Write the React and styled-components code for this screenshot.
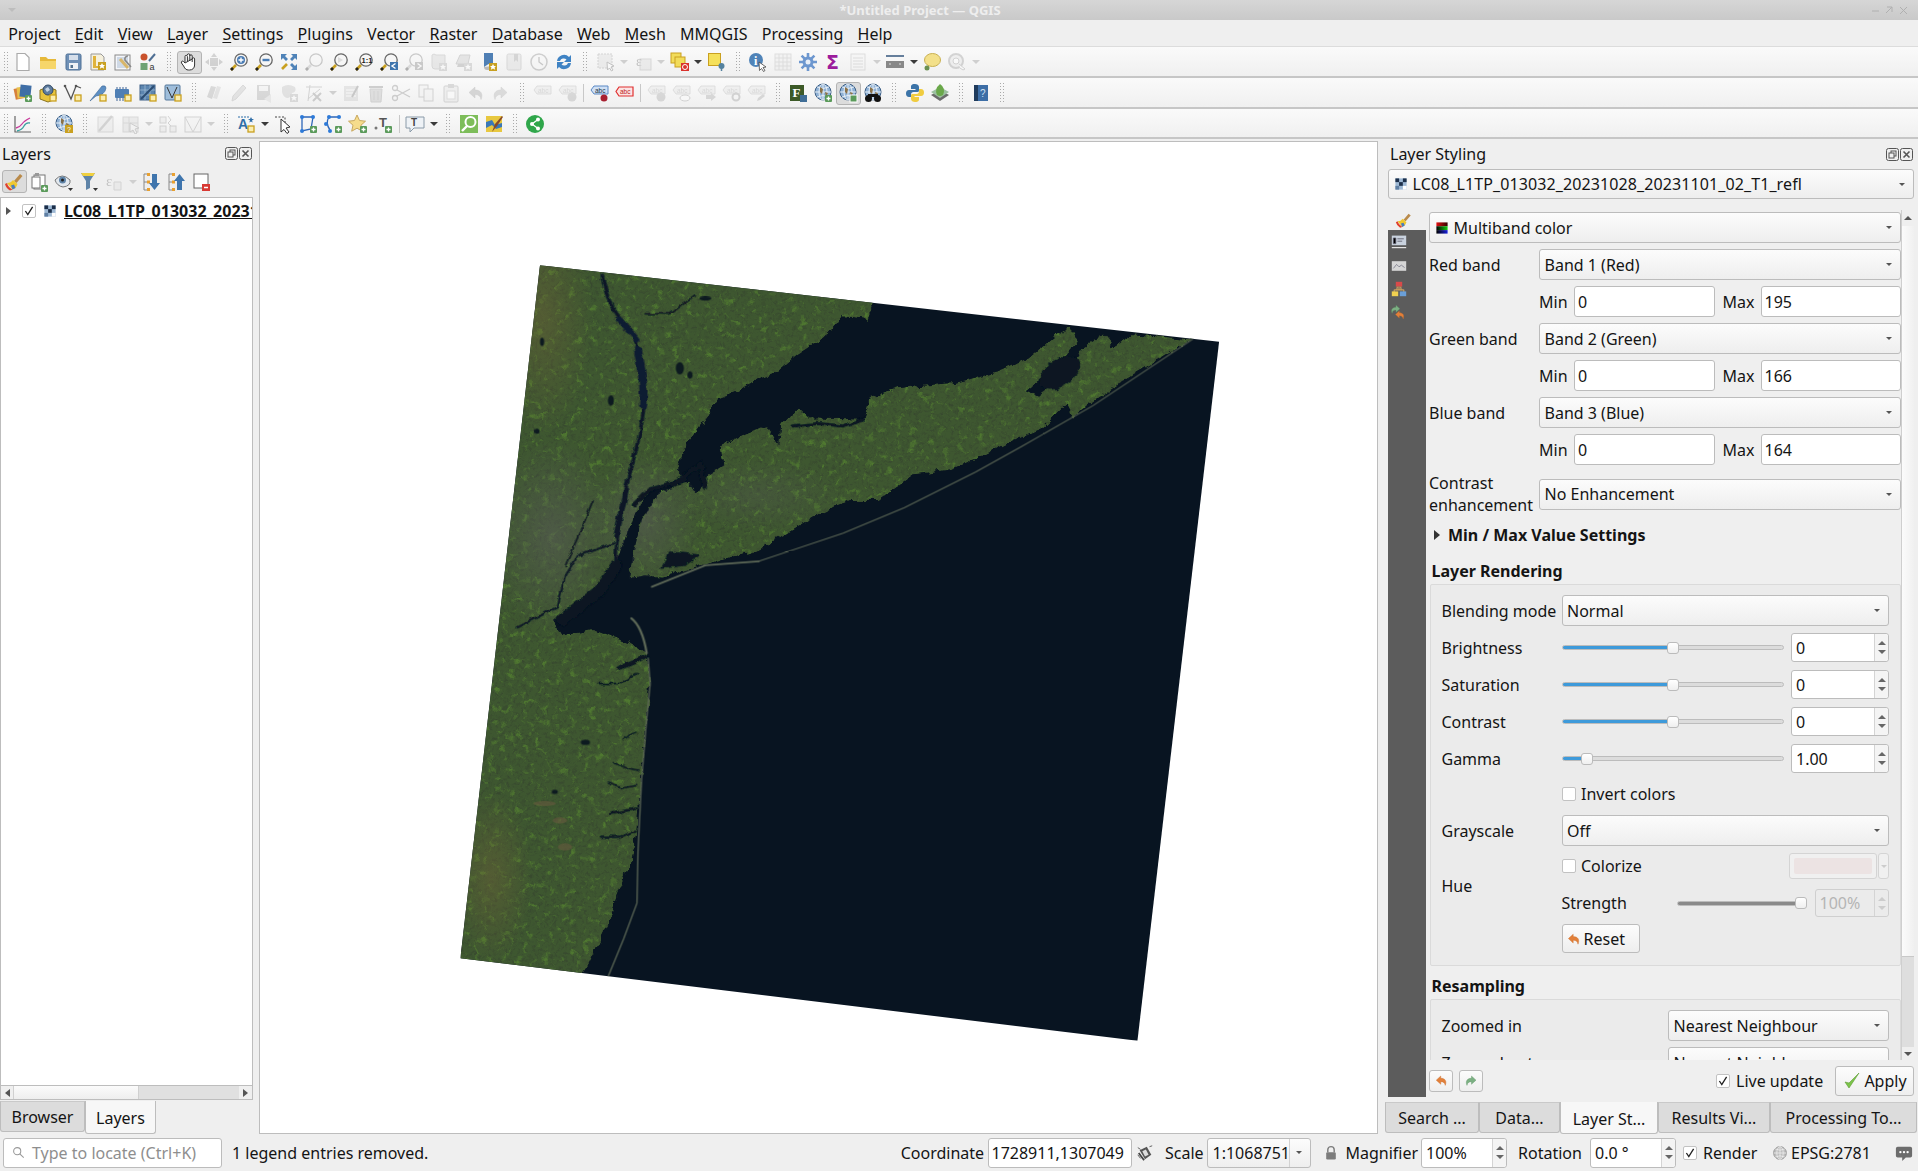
import React from "react";
import styled, { createGlobalStyle } from "styled-components";

const Global = createGlobalStyle`
  html, body { margin: 0; padding: 0; background: #efefef; }
  body { font-family: "Noto Sans", "Open Sans", sans-serif; font-size: 16px; color: #141414; }
  * { box-sizing: border-box; }
`;

const S = {
  Root: styled.div`
    width: 1918px;
    height: 1171px;
    overflow: hidden;
    display: flex;
    flex-direction: column;
    background: #efefef;
  `,
  TitleBar: styled.div`
    height: 20px;
    flex: none;
    display: flex;
    align-items: center;
    justify-content: space-between;
    padding: 0 8px;
    background: linear-gradient(#d6d6d6, #c9c9c9);
  `,
  Title: styled.div`
    font-weight: 700;
    font-size: 13px;
    color: #eeeeee;
    margin-right: 46px;
  `,
  MenuBar: styled.div`
    height: 27px;
    flex: none;
    display: flex;
    align-items: center;
    background: #efefef;
    border-bottom: 1px solid #dcdcdc;
    padding: 1px 0 0 1px;
  `,
  MenuItem: styled.div`
    padding: 0 7.15px;
    font-size: 16px;
    u { text-underline-offset: 2px; text-decoration-thickness: 1px; }
  `,
  Toolbar: styled.div`
    height: ${(p) => p.$h || 31}px;
    flex: none;
    display: flex;
    align-items: center;
    padding-top: ${(p) => p.$pt || 1}px;
    background: linear-gradient(#fafafa, #f0f0f0);
    border-bottom: 2px solid #c6c6c6;
  `,
  Grip: styled.div`
    flex: none;
    width: ${(p) => p.$w || 16.5}px;
    height: 22px;
    display: flex;
    justify-content: center;
    &::before {
      content: "";
      width: 5px;
      height: 100%;
      background-image: radial-gradient(circle, #aaa 0.8px, transparent 1px);
      background-size: 3px 3px;
    }
    &:first-child {
      width: 10.2px;
    }
  `,
  ToolBtn: styled.div`
    flex: none;
    width: 25px;
    height: 23px;
    display: flex;
    align-items: center;
    justify-content: center;
    border-radius: 3px;
    ${(p) => p.$on && "background: #dcdcdc; border: 1px solid #b4b4b4;"}
    svg {
      display: block;
      ${(p) => p.$off && "filter: grayscale(1) opacity(0.32);"}
    }
  `,
  Drop: styled.div`
    flex: none;
    width: 12px;
    display: flex;
    justify-content: center;
    &::before {
      content: "";
      border-left: 4px solid transparent;
      border-right: 4px solid transparent;
      border-top: 4px solid ${(p) => (p.$off ? "#cfcfcf" : "#3a3a3a")};
    }
  `,
  Sep: styled.div`
    flex: none;
    width: ${(p) => p.$w || 7}px;
    height: 18px;
    display: flex;
    justify-content: center;
    &::before {
      content: "";
      width: 1px;
      background: #c8c8c8;
    }
  `,
  Main: styled.div`
    height: 995px;
    flex: none;
    display: flex;
  `,
  LeftDock: styled.div`
    width: 253px;
    flex: none;
    margin-right: 6px;
    display: flex;
    flex-direction: column;
  `,
  DockTitle: styled.div`
    height: ${(p) => p.$h}px;
    flex: none;
    display: flex;
    align-items: center;
    justify-content: space-between;
    padding-left: 2px;
    padding-bottom: ${(p) => p.$pb || 0}px;
  `,
  DockBtns: styled.div`
    display: flex;
    gap: 1px;
    padding-right: ${(p) => p.$r || 1}px;
  `,
  LayerTools: styled.div`
    height: 27px;
    flex: none;
    display: flex;
    align-items: center;
    padding: 0 0 4px 1.5px;
  `,
  Tree: styled.div`
    flex: 1;
    background: #fff;
    border: 1px solid #bdbdbd;
    border-bottom: none;
    overflow: hidden;
  `,
  TreeRow: styled.div`
    height: 26px;
    display: flex;
    align-items: center;
    padding-left: 5px;
    & > * {
      flex: none;
    }
  `,
  Twisty: styled.div`
    width: 0;
    height: 0;
    border-top: 4px solid transparent;
    border-bottom: 4px solid transparent;
    border-left: 5px solid #555;
    margin-right: 11px;
  `,
  TreeName: styled.div`
    margin-left: 7px;
    font-weight: 700;
    font-size: 16px;
    text-decoration: underline;
    white-space: nowrap;
  `,
  HScroll: styled.div`
    height: 15px;
    flex: none;
    display: flex;
    border: 1px solid #bdbdbd;
  `,
  ScrollBtn: styled.div`
    flex: none;
    width: ${(p) => p.$w || 12}px;
    height: ${(p) => p.$h || "auto"};
    display: flex;
    align-items: center;
    justify-content: center;
    background: #efefef;
  `,
  ThumbH: styled.div`
    width: 126px;
    background: linear-gradient(#fbfbfb, #eeeeee);
    border: 1px solid #d0d0d0;
    border-top: none;
    border-bottom: none;
  `,
  GrooveH: styled.div`
    flex: 1;
    background: #e0e0e0;
  `,
  Tri: styled.div`
    width: 0;
    height: 0;
    flex: none;
    ${(p) =>
      p.$dir === "l" &&
      `border-top:4px solid transparent;border-bottom:4px solid transparent;border-right:5px solid #555;`}
    ${(p) =>
      p.$dir === "r" &&
      `border-top:${p.$s || 4}px solid transparent;border-bottom:${p.$s || 4}px solid transparent;border-left:${(p.$s || 4) + 1}px solid ${p.$c || "#555"};`}
    ${(p) =>
      p.$dir === "u" &&
      `border-left:${p.$s || 4}px solid transparent;border-right:${p.$s || 4}px solid transparent;border-bottom:${p.$s || 4}px solid ${p.$c || "#555"};`}
    ${(p) =>
      p.$dir === "d" &&
      `border-left:${p.$s || 4}px solid transparent;border-right:${p.$s || 4}px solid transparent;border-top:${p.$s || 4}px solid ${p.$c || "#555"};`}
  `,
  Tabs: styled.div`
    display: flex;
    align-items: flex-start;
    flex: none;
    height: ${(p) => p.$h}px;
    margin-top: ${(p) => p.$mt || 0}px;
    margin-left: ${(p) => p.$ml || 0}px;
  `,
  Tab: styled.div`
    width: ${(p) => p.$w}px;
    height: ${(p) => (p.$on ? "100%" : "31px")};
    flex: none;
    display: flex;
    align-items: center;
    justify-content: center;
    border: 1px solid #bdbdbd;
    border-top: ${(p) => (p.$on ? "none" : "1px solid #c9c9c9")};
    border-radius: 0 0 3px 3px;
    background: ${(p) => (p.$on ? "#f7f7f7" : "#dcdcdc")};
    padding-top: ${(p) => (p.$on ? 2 : 0)}px;
    white-space: nowrap;
  `,
  Canvas: styled.div`
    width: 1119px;
    flex: none;
    margin: 2px 7px 0 0;
    background: #fff;
    border: 1px solid #bdbdbd;
    position: relative;
    overflow: hidden;
  `,
  MapSvg: styled.svg`
    position: absolute;
    left: 180px;
    top: 108px;
    display: block;
  `,
  RightDock: styled.div`
    width: 533px;
    flex: none;
    padding: 0 4px 0 3px;
    display: flex;
    flex-direction: column;
  `,
  LayerCombo: styled.div`
    height: 30px;
    flex: none;
    display: flex;
  `,
  Body: styled.div`
    height: 887px;
    flex: none;
    margin-top: 11px;
    display: flex;
  `,
  Side: styled.div`
    width: 38px;
    flex: none;
    display: flex;
    flex-direction: column;
  `,
  SideTop: styled.div`
    height: 20px;
    flex: none;
    padding: 0 0 0 7px;
    display: flex;
    align-items: center;
  `,
  SideRest: styled.div`
    flex: 1;
    background: #5c5c5c;
    display: flex;
    flex-direction: column;
    padding: 4px 0 0 3px;
    gap: 7.5px;
  `,
  Column: styled.div`
    flex: 1;
    min-width: 0;
    margin-left: 3px;
    display: flex;
    flex-direction: column;
  `,
  Scroller: styled.div`
    height: 850px;
    flex: none;
    display: flex;
  `,
  Form: styled.div`
    width: 472px;
    flex: none;
    overflow: hidden;
    padding-top: 2px;
  `,
  VScroll: styled.div`
    width: 13px;
    flex: none;
    display: flex;
    flex-direction: column;
    border-left: 1px solid #cfcfcf;
  `,
  ThumbV: styled.div`
    height: 731px;
    flex: none;
    background: linear-gradient(90deg, #fbfbfb, #f0f0f0);
    border-bottom: 1px solid #c8c8c8;
  `,
  GrooveV: styled.div`
    flex: 1;
    background: #dedede;
  `,
  Row: styled.div`
    display: flex;
    align-items: center;
    height: ${(p) => p.$h || 31}px;
    margin-top: ${(p) => p.$mt || 0}px;
    flex: none;
  `,
  Label: styled.div`
    flex: none;
    width: ${(p) => p.$w}px;
    line-height: 22px;
    ${(p) => p.$top && `align-self: flex-start; margin-top: ${p.$top}px;`}
  `,
  Combo: styled.div`
    flex: ${(p) => (p.$w ? "none" : 1)};
    width: ${(p) => (p.$w ? `${p.$w}px` : "auto")};
    height: ${(p) => p.$h || 31}px;
    display: flex;
    align-items: center;
    gap: 5px;
    padding: 0 5px 0 4.5px;
    border: 1px solid #bcbcbc;
    border-radius: 3px;
    background: linear-gradient(#fcfcfc, #eeeeee);
    white-space: nowrap;
  `,
  ComboText: styled.div`
    flex: 1;
    min-width: 0;
    letter-spacing: ${(p) => p.$ls || 0}px;
  `,
  ComboArrow: styled.div`
    flex: none;
    margin-right: 3px;
    width: 0;
    height: 0;
    border-left: 3.5px solid transparent;
    border-right: 3.5px solid transparent;
    border-top: 3.5px solid #555;
  `,
  ComboDivider: styled.div`
    flex: none;
    width: 1px;
    height: 100%;
    background: #d2d2d2;
    margin-right: 1px;
  `,
  Input: styled.div`
    width: ${(p) => p.$w}px;
    flex: ${(p) => (p.$w ? "none" : 1)};
    height: ${(p) => p.$h || 31}px;
    display: flex;
    align-items: center;
    padding-left: 3px;
    background: #fff;
    border: 1px solid #bcbcbc;
    border-radius: 3px;
    white-space: nowrap;
  `,
  Expander: styled.div`
    height: 30px;
    display: flex;
    align-items: center;
    font-weight: 700;
    padding-left: 5px;
    gap: 8px;
    margin-top: 4px;
  `,
  Heading: styled.div`
    height: 25px;
    display: flex;
    align-items: center;
    font-weight: 700;
    padding: 0 0 2px 2.5px;
    margin-top: ${(p) => p.$mt || 0}px;
  `,
  Group: styled.div`
    margin-left: 1px;
    border: 1px solid #dadada;
    border-radius: 2px;
    background: #ebebeb;
    padding: ${(p) => p.$pt || 10}px 11px 0 10.5px;
    height: ${(p) => p.$h}px;
  `,
  SliderBox: styled.div`
    position: relative;
    flex: none;
    width: ${(p) => p.$w}px;
    height: 14px;
    margin-right: ${(p) => p.$mr || 0}px;
    display: flex;
    align-items: center;
  `,
  Track: styled.div`
    width: 100%;
    height: 5px;
    border-radius: 3px;
    border: 1px solid #bcbcbc;
    background: linear-gradient(
      90deg,
      ${(p) => p.$fill} ${(p) => p.$value}%,
      #dcdcdc ${(p) => p.$value}%
    );
  `,
  Handle: styled.div`
    position: absolute;
    top: 1px;
    left: ${(p) => p.$value}%;
    margin-left: -6px;
    width: 12px;
    height: 12px;
    border: 1px solid #bbb;
    border-radius: 3px;
    background: linear-gradient(#fff, #efefef);
  `,
  Spin: styled.div`
    flex: ${(p) => (p.$w ? "none" : 1)};
    width: ${(p) => p.$w}px;
    height: ${(p) => p.$h || 29}px;
    display: flex;
    border: 1px solid ${(p) => (p.$off ? "#cfcfcf" : "#bcbcbc")};
    border-radius: 3px;
    background: ${(p) => (p.$off ? "#ebebeb" : "#fff")};
    color: ${(p) => (p.$off ? "#b5b5b5" : "inherit")};
  `,
  SpinText: styled.div`
    flex: 1;
    display: flex;
    align-items: center;
    padding-left: 4px;
    white-space: nowrap;
  `,
  SpinBtns: styled.div`
    width: 14px;
    flex: none;
    display: flex;
    flex-direction: column;
    align-items: center;
    justify-content: center;
    gap: 5px;
    border-left: 1px solid #d4d4d4;
    background: ${(p) => (p.$off ? "#ebebeb" : "#f4f4f4")};
    border-radius: 0 3px 3px 0;
  `,
  Check: styled.div`
    width: 14px;
    height: 14px;
    flex: none;
    border: 1px solid #c2c2c2;
    border-radius: 2px;
    background: #fff;
    display: flex;
    align-items: center;
    justify-content: center;
    margin-right: ${(p) => p.$mr ?? 5.5}px;
  `,
  HueBlock: styled.div`
    display: flex;
    margin-top: 7px;
  `,
  HueCol: styled.div`
    flex: 1;
    display: flex;
    flex-direction: column;
  `,
  ColorBtn: styled.div`
    margin-left: auto;
    width: 88px;
    height: 26px;
    padding: 4px;
    border: 1px solid #d4d4d4;
    border-radius: 3px;
    background: #f0f0f0;
    &::before {
      content: "";
      display: block;
      height: 100%;
      border-radius: 2px;
      background: #ece3e3;
    }
  `,
  ColorArrow: styled.div`
    width: 11px;
    height: 26px;
    margin-left: 1px;
    flex: none;
    display: flex;
    align-items: center;
    justify-content: center;
    border: 1px solid #d4d4d4;
    border-radius: 3px;
    background: #f0f0f0;
  `,
  Button: styled.div`
    flex: none;
    width: ${(p) => p.$w}px;
    height: ${(p) => p.$h}px;
    margin-left: ${(p) => p.$ml || 0}px;
    display: flex;
    align-items: center;
    justify-content: ${(p) => (p.$start ? "flex-start" : "center")};
    padding-left: ${(p) => (p.$start ? 3 : 0)}px;
    gap: 2px;
    border: 1px solid #bcbcbc;
    border-radius: 3px;
    background: linear-gradient(#fcfcfc, #eeeeee);
  `,
  ApplyWrap: styled.div`
    margin-left: auto;
  `,
  Footer: styled.div`
    height: 37px;
    flex: none;
    display: flex;
    align-items: center;
    padding-top: 4px;
  `,
  Status: styled.div`
    height: 37px;
    flex: none;
    display: flex;
    align-items: center;
    padding-left: 3px;
    white-space: nowrap;
  `,
  Locator: styled.div`
    width: 219px;
    height: 30px;
    flex: none;
    display: flex;
    align-items: center;
    gap: 7px;
    padding-left: 8px;
    background: #fff;
    border: 1px solid #bcbcbc;
    border-radius: 3px;
    color: #8e8e8e;
  `,
  Message: styled.div`
    flex: 1;
    margin-left: 10px;
  `,
  Tip: styled.div`
    flex: none;
    ${(p) => p.$w && `width: ${p.$w}px;`}
    margin-left: ${(p) => p.$ml || 0}px;
    margin-right: ${(p) => p.$mr || 0}px;
    display: flex;
    align-items: center;
  `,
};

const gold = (x, y) => (
  <rect x={x} y={y} width="6" height="6" fill="#fbeeb0" stroke="#c9a020" strokeWidth="1.3" />
);
const star = (x, y) => (
  <g>
    <rect x={x} y={y} width="8" height="8" fill="#c8a020" />
    <path
      d={`M${x + 4} ${y + 1}l1 2h2l-1.5 1.5.7 2.2-2.2-1.2-2.2 1.2.7-2.2L${x + 1} ${y + 3}h2z`}
      fill="#fff"
    />
  </g>
);
const plus = (x, y) => (
  <g>
    <rect x={x} y={y} width="7" height="7" rx="1" fill="#5a9a5a" />
    <path d={`M${x + 3.5} ${y + 1.5}v4M${x + 1.5} ${y + 3.5}h4`} stroke="#fff" strokeWidth="1.3" />
  </g>
);
const lens = (inner) => (
  <g>
    <path d="M7 13L2 18" stroke="#c9a020" strokeWidth="2.6" />
    <path d="M4 16L2 18" stroke="#222" strokeWidth="2.6" />
    <circle cx="12" cy="8" r="6.2" fill="#f6f6f6" stroke="#666" strokeWidth="1.3" />
    {inner}
  </g>
);
const abc = (badge, fill = "#ddd", col = "#999") => (
  <g>
    <path d="M4 3h14v8H4L1 7z" fill={fill} stroke={col} strokeWidth=".8" />
    <text x="5" y="9.5" fontSize="6.5" fontFamily="Liberation Sans" fill={col}>
      abc
    </text>
    {badge}
  </g>
);
const globe = (badge) => (
  <g>
    <circle cx="10" cy="9" r="8" fill="#8eb0d4" stroke="#3d5f86" />
    <path d="M2 9h16M10 1v16M4 4q6 3 12 0M4 14q6-3 12 0" stroke="#e6eef6" fill="none" />
    <ellipse cx="10" cy="9" rx="4" ry="8" fill="none" stroke="#e6eef6" />
    <path d="M7 4l3 2-1 5-2-2zM12 9l3 1-2 4z" fill="#8a7148" />
    {badge}
  </g>
);
const brush = (
  <g>
    <path d="M10 9l6-7 2.500 2-6 7z" fill="#b98a4a" />
    <path d="M3 11q4 0 6-3l4.500 4q-1 4-5 5.500z" fill="#f0c830" />
    <path d="M3 11q1 4 5.500 6.500L6 18.500Q2 16 1 12z" fill="#e0402c" />
    <path d="M7 13.500l3-1 1.500 3.500-3 1.500z" fill="#4a7cc0" />
  </g>
);
const undo = (
  <path d="M8 3L2 8.5 8 14v-3.5c3.5 0 5.5 1.5 6 5 2.5-6-.5-9.5-6-9.5z" fill="#e2803a" stroke="#c96a26" strokeWidth=".5" />
);
const redo = (
  <path
    d="M8 3L2 8.5 8 14v-3.5c3.5 0 5.5 1.5 6 5 2.5-6-.5-9.5-6-9.5z"
    transform="matrix(-1 0 0 1 17 0)"
    fill="#7cb083"
    stroke="#5e9666"
    strokeWidth=".5"
  />
);
const raster = (
  <g>
    <rect x="2" y="2" width="16" height="16" fill="#9db8d4" />
    <rect x="2" y="2" width="5.3" height="5.3" fill="#1c2f4a" />
    <rect x="12.7" y="2" width="5.3" height="5.3" fill="#1c2f4a" />
    <rect x="7.3" y="7.3" width="5.3" height="5.3" fill="#1c2f4a" />
    <rect x="2" y="12.7" width="5.3" height="5.3" fill="#5f7fa3" />
    <rect x="12.7" y="12.7" width="5.3" height="5.3" fill="#fff" />
  </g>
);

const ICONS = {
  new: <path d="M4 1.5h8l4 4v13H4z" fill="#fff" stroke="#aaa" strokeWidth="1.2" />,
  open: (
    <g>
      <path d="M2 5h6l2 2h8v10H2z" fill="#e6b93a" />
      <path d="M2 9h16v8H2z" fill="#f6d66a" />
    </g>
  ),
  save: (
    <g>
      <rect x="3" y="2" width="15" height="16" rx="1.5" fill="#6f90b6" stroke="#4f7096" />
      <rect x="6" y="3" width="9" height="5" fill="#d5deea" />
      <rect x="6" y="11" width="9" height="6" fill="#eef2f6" />
      <rect x="7.5" y="13" width="2.5" height="3" fill="#54728f" />
    </g>
  ),
  saveAs: (
    <g>
      <path d="M3 2h10l3 3v13H3z" fill="#f5f0dc" stroke="#999" />
      <path d="M5 4h3v10h7v2H5z" fill="#e0b33a" />
      {star(10, 10)}
    </g>
  ),
  layout: (
    <g>
      <rect x="2" y="3" width="15" height="15" fill="#f4f6fa" stroke="#8a8a8a" />
      <rect x="4" y="5" width="11" height="11" fill="#cfd9e6" />
      <path d="M7 7l8 9" stroke="#d8b66a" strokeWidth="3" />
      <path d="M15 4a3 3 0 0 0-3 4l6 7" stroke="#888" strokeWidth="1.6" fill="none" />
    </g>
  ),
  style: (
    <g>
      <circle cx="6" cy="5" r="3.5" fill="#c9522c" />
      <rect x="2.5" y="11" width="7" height="7" fill="#6fa374" />
      <path d="M11 9l6-7" stroke="#4f6f94" strokeWidth="2" />
      <text x="11.5" y="18" fontSize="9" fontFamily="Liberation Sans" fill="#333">
        a
      </text>
    </g>
  ),
  hand: (
    <path
      d="M6 10V4.500a1.200 1.200 0 0 1 2.400 0V9m0-6a1.200 1.200 0 0 1 2.400 0v6m0-5a1.200 1.200 0 0 1 2.400 0v6m0-3a1.200 1.200 0 0 1 2.400 0v6c0 3-2 5-5 5h-1c-2.500 0-3.500-1-5-4L2.500 11c-.8-1.500 1-2.500 2-1.500L6 11z"
      fill="#fff"
      stroke="#333"
      strokeWidth="1"
    />
  ),
  panSel: (
    <g fill="#6e8bb0">
      <path d="M10 1l3 4H7zM10 19l-3-4h6zM1 10l4-3v6zM19 10l-4 3V7z" />
      <rect x="6" y="6" width="8" height="8" />
    </g>
  ),
  zoomIn: lens(
    <g>
      <circle cx="12" cy="8" r="4" fill="#4a7cb4" />
      <path d="M12 5.500v5M9.500 8h5" stroke="#fff" strokeWidth="1.400" />
    </g>
  ),
  zoomOut: lens(<path d="M8.500 8h7" stroke="#4a7cb4" strokeWidth="2.400" />),
  full: (
    <g>
      <path d="M2 2h6L6 4l3 3-2 2-3-3-2 2zM18 2v6l-2-2-3 3-2-2 3-3-2-2zM18 12v6h-6l2-2-3-3 2-2 3 3z" fill="#4f83b8" />
      <path d="M8 12l-5 5" stroke="#c9a020" strokeWidth="2.600" />
    </g>
  ),
  zoomLayer: lens(null),
  zoomSel: lens(<path d="M9 5l5 3-5 3z" fill="#ddd" />),
  zoom1: lens(
    <text x="7.500" y="11" fontSize="7.500" fontFamily="Liberation Sans" fontWeight="700" fill="#222">
      1:1
    </text>
  ),
  zoomLast: (
    <g>
      {lens(null)}
      <rect x="11" y="10" width="8" height="8" fill="#3f75ad" />
      <path d="M16.500 11.500L13 14l3.500 2.500" stroke="#fff" fill="none" strokeWidth="1.400" />
    </g>
  ),
  zoomNext: (
    <g>
      {lens(null)}
      <rect x="11" y="10" width="8" height="8" fill="#3f75ad" />
      <path d="M13.500 11.500L17 14l-3.500 2.500" stroke="#fff" fill="none" strokeWidth="1.400" />
    </g>
  ),
  newMap: (
    <g>
      <path d="M3 3q2-2 4 0h9v14H6q-3 0-3-3z" fill="#c9c9c9" stroke="#999" />
      {star(10, 11)}
    </g>
  ),
  new3d: (
    <g>
      <path d="M6 3h10l-2 9H2z" fill="#bdbdbd" stroke="#888" />
      <path d="M4 12h10v3H3z" fill="#888" />
      {star(10, 11)}
    </g>
  ),
  bookNew: (
    <g>
      <path d="M5 1h9v14l-4.500-3L5 15z" fill="#4f7fb4" />
      <path d="M5 15q0 3 3 3h5v-4z" fill="#bbb" />
      {star(10, 11)}
    </g>
  ),
  bookList: (
    <g>
      <rect x="3" y="2" width="14" height="16" rx="1.500" fill="#d0d0d0" stroke="#999" />
      <path d="M10 2h4v8l-2-2-2 2z" fill="#6f90b6" />
    </g>
  ),
  clock: (
    <g>
      <circle cx="10" cy="10" r="8" fill="#f5f5f5" stroke="#777" strokeWidth="1.500" />
      <path d="M10 5v5l4 3" stroke="#666" strokeWidth="1.300" fill="none" />
    </g>
  ),
  refresh: (
    <g fill="#3f83c4">
      <path d="M3 9a7 7 0 0 1 12-4l2-2v7h-7l2.500-2.500A4 4 0 0 0 6 9z" />
      <path d="M17 11a7 7 0 0 1-12 4l-2 2v-7h7l-2.500 2.500A4 4 0 0 0 14 11z" />
    </g>
  ),
  select: (
    <g>
      <rect x="2" y="2" width="14" height="14" fill="#d9d6b0" stroke="#888" strokeDasharray="2 1" />
      <path d="M11 10l7 4-3 1 2 3-1.500 1-2-3-2 2z" fill="#fff" stroke="#555" />
    </g>
  ),
  expr: (
    <g>
      <rect x="7" y="7" width="11" height="11" fill="#d9d6b0" stroke="#999" />
      <text x="3" y="14" fontSize="14" fontFamily="Liberation Serif" fill="#555">
        ε
      </text>
    </g>
  ),
  deselect: (
    <g>
      <rect x="1" y="1" width="10" height="10" fill="#f2dc5a" stroke="#c9a020" />
      <rect x="5" y="5" width="10" height="10" fill="#f2dc5a" stroke="#c9a020" />
      <rect x="11" y="11" width="8" height="8" fill="#d9322c" />
      <circle cx="15" cy="15" r="2.500" fill="none" stroke="#fff" />
    </g>
  ),
  selLoc: (
    <g>
      <rect x="1.500" y="1.500" width="12" height="12" fill="#f5e05a" stroke="#c9a020" />
      <circle cx="14.500" cy="14" r="3" fill="#54829f" />
      <path d="M14.500 15v4" stroke="#54829f" strokeWidth="1.500" />
    </g>
  ),
  identify: (
    <g>
      <circle cx="8" cy="8" r="7" fill="#4f83b8" />
      <text x="6" y="13" fontSize="12" fontWeight="700" fontFamily="Liberation Serif" fill="#fff">
        i
      </text>
      <path d="M11 10l7 5-3 .5 2 3-1.500 1-2-3-2 2z" fill="#fff" stroke="#444" strokeWidth=".8" />
    </g>
  ),
  table: (
    <g>
      <rect x="2" y="2" width="16" height="16" fill="#e8e8e8" stroke="#aaa" />
      <path d="M2 6h16M2 10h16M2 14h16M6 2v16M10 2v16M14 2v16" stroke="#aaa" />
    </g>
  ),
  gear: (
    <g>
      <circle cx="10" cy="10" r="5.500" fill="#6d97cf" />
      <path d="M10 1v18M1 10h18M3.600 3.600l12.800 12.800M16.400 3.600L3.600 16.400" stroke="#6d97cf" strokeWidth="2.600" />
      <circle cx="10" cy="10" r="2.500" fill="#e8eff8" />
    </g>
  ),
  sigma: (
    <text x="3" y="17" fontSize="19" fontWeight="700" fontFamily="DejaVu Sans" fill="#9c1c9c">
      Σ
    </text>
  ),
  list: (
    <g>
      <rect x="3" y="2" width="14" height="16" fill="#eef2f6" stroke="#9ab" />
      <path d="M5 6h10M5 9h10M5 12h10M5 15h10" stroke="#9ab" />
    </g>
  ),
  ruler: (
    <g>
      <path d="M1 4h18" stroke="#35567c" strokeWidth="1.500" />
      <rect x="1" y="9" width="18" height="7" fill="#888" />
      <path d="M4 12h2M14 12h2" stroke="#ddd" />
    </g>
  ),
  balloon: (
    <g>
      <ellipse cx="10.500" cy="8" rx="8" ry="6.500" fill="#f3e08a" stroke="#c9b050" />
      <circle cx="5" cy="16" r="2.500" fill="#6a8f50" />
    </g>
  ),
  cogZoom: (
    <g>
      <circle cx="9" cy="9" r="7" fill="#ddd" stroke="#888" strokeWidth="2" />
      <circle cx="9" cy="9" r="3" fill="#fff" stroke="#888" />
      <path d="M12 12l6 5-2 1-3-2" fill="#fff" stroke="#888" />
    </g>
  ),
  dsm: (
    <g>
      <rect x="1.500" y="5" width="10" height="11" transform="rotate(-12 6 10)" fill="#d6803c" />
      <rect x="4" y="4" width="10" height="11" transform="rotate(-6 9 9)" fill="#e8c04a" />
      <rect x="7" y="2" width="11" height="12" transform="rotate(6 12 8)" fill="#3f6ea6" />
      {plus(12, 12)}
    </g>
  ),
  gpkg: (
    <g>
      <path d="M2 7l8-3 8 3v9l-8 3-8-3z" fill="#e8c43c" stroke="#8a7420" />
      <circle cx="10" cy="7" r="5" fill="#5e7c9e" stroke="#2f4763" />
      <path d="M7 6l3-2 2 3-3 2z" fill="#c4d4e4" />
      {gold(12, 12)}
    </g>
  ),
  vline: (
    <g>
      <path d="M2 3l6 13 5-13 5 2" fill="none" stroke="#555" strokeWidth="1.300" />
      <circle cx="2" cy="3" r="1.300" fill="#555" />
      <circle cx="13" cy="3" r="1.300" fill="#555" />
      {gold(12, 12)}
    </g>
  ),
  feather: (
    <g>
      <path d="M2 18L14 3q4-1 4 2-1 7-10 8z" fill="#5d8fc4" stroke="#3d6696" strokeWidth=".6" />
      {gold(12, 12)}
    </g>
  ),
  chip: (
    <g>
      <path d="M4 4v14M7 4v14M10 4v14M13 4v14" stroke="#3f6596" />
      <rect x="2" y="6" width="14" height="9" rx="1" fill="#4f7fb4" />
      {gold(12, 12)}
    </g>
  ),
  rasterNew: (
    <g>
      <rect x="2" y="2" width="15" height="15" fill="#5d86b0" stroke="#3c5f86" />
      <path d="M2 7h15M2 12h15M7 2v15M12 2v15" stroke="#a8c0d8" strokeWidth=".7" />
      <path d="M3 16L16 3" stroke="#2b4c72" strokeWidth="2" />
      {gold(12, 12)}
    </g>
  ),
  meshNew: (
    <g>
      <rect x="2" y="2" width="15" height="15" rx="1" fill="#9fbedb" stroke="#55789c" />
      <path d="M4 4l5 11 5-11" stroke="#333" fill="none" />
      {gold(12, 12)}
    </g>
  ),
  edits: (
    <g>
      <path d="M3 14l4-11 5 1-4 12z" fill="#999" />
      <path d="M9 15l4-12 4 1-4 12z" fill="#bbb" />
    </g>
  ),
  pencil: <path d="M3 18l1-5L14 2l3 3L7 16z" fill="#bbb" stroke="#999" />,
  saveEdit: (
    <g>
      <rect x="3" y="2" width="13" height="15" fill="#999" />
      <rect x="5" y="3" width="9" height="5" fill="#eee" />
      <path d="M10 16l7-5v9z" fill="#ccc" />
    </g>
  ),
  blobNew: (
    <g>
      <path d="M3 4q6-4 13 0 2 5-3 6-1 5-5 5Q4 14 3 9z" fill="#b5b5b5" />
      {star(11, 11)}
    </g>
  ),
  vertex: (
    <g>
      <path d="M2 4h16M6 2l-2 16M4 16l12-10" stroke="#888" fill="none" />
      <path d="M9 10l8 8M17 10l-8 8" stroke="#777" strokeWidth="2" />
    </g>
  ),
  note: (
    <g>
      <rect x="3" y="3" width="14" height="15" fill="#c0c0a0" />
      <path d="M5 7h10M5 10h10M5 13h10" stroke="#fff" />
      <path d="M11 14l6-11" stroke="#666" strokeWidth="2" />
    </g>
  ),
  trash: (
    <g>
      <path d="M4 6h12l-1 13H5z" fill="#c8a8a0" stroke="#888" />
      <path d="M3 4h14" stroke="#777" strokeWidth="2" />
      <path d="M8 8v9M12 8v9" stroke="#888" />
    </g>
  ),
  scissors: (
    <g fill="none" stroke="#777" strokeWidth="1.300">
      <circle cx="4" cy="5" r="2.500" />
      <circle cx="4" cy="15" r="2.500" />
      <path d="M6 7l13 7M6 13l13-7" />
    </g>
  ),
  copy: (
    <g fill="#eee" stroke="#888">
      <rect x="3" y="2" width="9" height="12" />
      <rect x="8" y="6" width="9" height="12" />
    </g>
  ),
  paste: (
    <g>
      <rect x="3" y="3" width="14" height="16" rx="1" fill="#ddd" stroke="#888" />
      <rect x="7" y="1" width="6" height="4" fill="#999" />
      <rect x="6" y="8" width="8" height="8" fill="#fff" stroke="#aaa" />
    </g>
  ),
  undo: <g transform="translate(1 1)">{undo}</g>,
  redo: <g transform="translate(1 1)">{redo}</g>,
  abc: abc(null),
  abcPin: abc(<circle cx="14" cy="14" r="4.500" fill="#999" />),
  abcPinBlue: (
    <g>
      <path d="M4 3h14v8H4L1 7z" fill="#cfe0f5" stroke="#5a88c4" />
      <text x="5" y="9.500" fontSize="6.500" fontFamily="Liberation Sans" fill="#234">
        abc
      </text>
      <circle cx="14" cy="15" r="3.500" fill="#a82030" />
    </g>
  ),
  abcRed: (
    <g>
      <path d="M4 4h14v9H4L1 8.500z" fill="#fbe4e4" stroke="#e03030" strokeWidth="1.200" />
      <text x="5" y="11" fontSize="6.500" fontFamily="Liberation Sans" fill="#c02020">
        abc
      </text>
    </g>
  ),
  abcEye: abc(<ellipse cx="13" cy="15" rx="5" ry="3" fill="#fff" stroke="#888" />),
  abcMove: abc(<path d="M9 12h5v-2l5 4-5 4v-2H9z" fill="#999" />),
  abcRot: abc(<circle cx="14" cy="14" r="3.500" fill="none" stroke="#888" strokeWidth="2" />),
  abcEdit: abc(<path d="M10 18l1-3 5-4 2 2-5 4z" fill="#999" />),
  fIcon: (
    <g>
      <rect x="2" y="2" width="14" height="16" fill="#3d5a28" />
      <text x="4.500" y="14" fontSize="13" fontWeight="700" fontFamily="Liberation Serif" fill="#fff">
        F
      </text>
      <rect x="12" y="12" width="7" height="7" fill="#3f6d96" />
    </g>
  ),
  globeAdd: globe(plus(12, 12)),
  globeQuery: globe(<rect x="12" y="12" width="7" height="7" fill="#5a9a5a" stroke="#fff" />),
  globeBino: globe(
    <g fill="#111">
      <circle cx="5.500" cy="15.500" r="3.500" />
      <circle cx="14.500" cy="15.500" r="3.500" />
      <rect x="5" y="11" width="10" height="3" />
    </g>
  ),
  python: (
    <g>
      <path d="M10 1c-4 0-4 2-4 3v2h4.500v1H4C2 7 1 8.500 1 10.500S2 14 4 14h2v-2.500c0-1.500 1-2.500 2.500-2.500h4C14 9 14 8 14 7V4c0-2-2-3-4-3z" fill="#3c74a8" />
      <path d="M10 19c4 0 4-2 4-3v-2H9.500v-1H16c2 0 3-1.500 3-3.500S18 6 16 6h-2v2.500c0 1.500-1 2.500-2.500 2.500h-4C6 11 6 12 6 13v3c0 2 2 3 4 3z" fill="#f0cc40" />
    </g>
  ),
  plugins: (
    <g>
      <path d="M1 12l9-5 9 5-9 6z" fill="#6b6b6b" />
      <path d="M1 9l9-5 9 5-9 6z" fill="#9cc0a0" />
      <path d="M10 1q6 4 3 11-3 2-6 0-3-6 3-11z" fill="#6aa84a" />
    </g>
  ),
  help: (
    <g>
      <rect x="3" y="2" width="14" height="16" fill="#3d6ea6" />
      <rect x="3" y="2" width="4" height="16" fill="#1f3b5c" />
      <text x="9" y="14" fontSize="10" fontFamily="Liberation Sans" fill="#cfe0f2">
        ?
      </text>
    </g>
  ),
  chart: (
    <g fill="none">
      <path d="M2 2v16h16" stroke="#666" strokeWidth="1.200" />
      <path d="M3 14q4-1 6-4t8-6" stroke="#c8389a" strokeWidth="1.300" />
      <path d="M4 17q5-1 7-5t6-3" stroke="#3aa0a0" strokeWidth="1.300" />
    </g>
  ),
  globeKey: globe(
    <g>
      <rect x="11" y="11" width="8" height="8" fill="#c9a020" />
      <text x="13" y="18" fontSize="7" fontFamily="Liberation Sans" fill="#fff">
        ?
      </text>
    </g>
  ),
  dig1: (
    <g>
      <rect x="2" y="3" width="15" height="15" fill="#ddd" stroke="#999" />
      <path d="M3 17L16 2" stroke="#888" strokeWidth="2.500" />
    </g>
  ),
  dig2: (
    <g>
      <rect x="2" y="3" width="15" height="15" fill="#d8cfb8" stroke="#999" />
      <path d="M2 9h15M8 3v15" stroke="#999" />
      <path d="M9 9l9 5-4 1 2 4-2 1-2-4-3 2z" fill="#eee" stroke="#777" />
    </g>
  ),
  dig3: (
    <g fill="#ddd" stroke="#888">
      <rect x="2" y="3" width="6" height="6" />
      <rect x="2" y="12" width="6" height="6" />
      <rect x="12" y="12" width="6" height="6" />
      <path d="M10 2l3 4-3 3 3 3" fill="none" />
    </g>
  ),
  dig4: (
    <g fill="#eee" stroke="#888">
      <rect x="2" y="3" width="16" height="15" />
      <path d="M2 3l8 15 8-15" fill="none" />
    </g>
  ),
  labelA: (
    <g>
      <text x="2" y="15" fontSize="14" fontWeight="700" fontFamily="Liberation Sans" fill="#2f6ea8">
        A
      </text>
      <path d="M2 3h12" stroke="#2f6ea8" strokeDasharray="2 1" />
      <path d="M15 3l1 2h2l-2 1.500.7 2-1.700-1-1.700 1 .7-2-2-1.500h2z" fill="#2f6ea8" />
      {gold(12, 12)}
    </g>
  ),
  multiSel: (
    <g>
      <path d="M2 3h10v12" stroke="#444" fill="none" strokeDasharray="2 1.500" />
      <path d="M8 5l9 8-4 1 3 4-2 1.500-3-4-3 2.500z" fill="#fff" stroke="#333" />
    </g>
  ),
  poly: (
    <g>
      <path d="M4 3h11l-2 12-9 2z" fill="none" stroke="#2d66b8" strokeWidth="1.300" />
      <g fill="#2d7ad8">
        <circle cx="4" cy="3" r="2" />
        <circle cx="15" cy="3" r="2" />
        <circle cx="4" cy="17" r="2" />
      </g>
      {plus(12, 12)}
    </g>
  ),
  curve: (
    <g>
      <path d="M6 3h11M6 3Q2 9 7 16" fill="none" stroke="#2d66b8" strokeWidth="1.300" />
      <g fill="#2d7ad8">
        <circle cx="6" cy="3" r="2" />
        <circle cx="16" cy="3" r="2" />
        <circle cx="3" cy="10" r="2" />
        <circle cx="7" cy="17" r="2" />
      </g>
      {plus(12, 12)}
    </g>
  ),
  starAdd: (
    <g>
      <path d="M9 1l2.500 5.500 6 .7-4.500 4 1.300 6L9 14.200l-5.300 3 1.300-6-4.500-4 6-.7z" fill="#f6dc8c" stroke="#c8a860" />
      {plus(12, 12)}
    </g>
  ),
  textAdd: (
    <g>
      <text x="6" y="13" fontSize="13" fontWeight="700" fontFamily="Liberation Sans" fill="#555">
        T
      </text>
      <circle cx="3" cy="14" r="1.500" fill="#777" />
      {plus(12, 12)}
    </g>
  ),
  callout: (
    <g>
      <path d="M1 3h18v11H9l-4 4v-4H1z" fill="#eef2f6" stroke="#8a9aa8" />
      <text x="6" y="12" fontSize="10" fontWeight="700" fontFamily="Liberation Sans" fill="#444">
        T
      </text>
    </g>
  ),
  greenLens: (
    <g>
      <rect x="1" y="1" width="18" height="18" fill="#7dbd5a" />
      <circle cx="11.500" cy="8" r="5" fill="none" stroke="#fff" strokeWidth="2" />
      <path d="M8 12l-5 5" stroke="#fff" strokeWidth="2.400" />
    </g>
  ),
  mapEdit: (
    <g>
      <rect x="2" y="2" width="16" height="16" fill="#e8c840" />
      <path d="M2 8l6-2 3 5 7-2v4l-6 2-4-4-6 3z" fill="#3a78b8" />
      <path d="M8 18l3-8 7-8 1 1-6 9z" fill="#8a4a28" />
    </g>
  ),
  share: (
    <g>
      <circle cx="10" cy="10" r="9" fill="#2fa64a" />
      <path d="M13 5.500L7 10l6 4.500" stroke="#fff" fill="none" strokeWidth="1.300" />
      <g fill="#fff">
        <circle cx="13" cy="5.500" r="2" />
        <circle cx="7" cy="10" r="2" />
        <circle cx="13" cy="14.500" r="2" />
      </g>
    </g>
  ),
  brush,
  addGroup: (
    <g>
      <rect x="5" y="3" width="11" height="14" fill="#fff" stroke="#777" />
      <rect x="3" y="5" width="8" height="11" fill="#fff" stroke="#777" />
      <rect x="6" y="1" width="4" height="3" fill="#999" />
      {plus(12, 13)}
    </g>
  ),
  eye: (
    <g>
      <path d="M1 8q7-8 15 0 1 6-7 7-6-1-8-7z" fill="#e2e8ee" stroke="#777" />
      <circle cx="8.500" cy="8" r="3.500" fill="#5f84a8" />
      <circle cx="8.500" cy="8" r="1.500" fill="#222" />
      <path d="M14 16h5l-2.500 3z" fill="#333" />
    </g>
  ),
  funnel: (
    <g>
      <path d="M2 1h14l-5 8v7l-4 2V9z" fill="#5f84a8" />
      <path d="M2 1h14l-2 3H4z" fill="#f0d040" />
      <path d="M14 16h5l-2.500 3z" fill="#333" />
    </g>
  ),
  epsilon: (
    <g>
      <text x="2" y="14" fontSize="15" fontFamily="Liberation Serif" fill="#666">
        ε
      </text>
      <path d="M10 10h7v8h-7z" fill="#ddd" stroke="#999" />
    </g>
  ),
  expand: (
    <g>
      <path d="M3 2h5M3 2v16h5M3 10h4" stroke="#888" fill="none" />
      <g fill="#e8a030">
        <rect x="6" y="1" width="3" height="3" />
        <rect x="6" y="8.500" width="3" height="3" />
        <rect x="6" y="16" width="3" height="3" />
      </g>
      <path d="M11 2h5v9h3l-5.500 7L8 11h3z" fill="#3f75ad" />
    </g>
  ),
  collapse: (
    <g>
      <path d="M3 2h5M3 2v16h5M3 10h4" stroke="#888" fill="none" />
      <g fill="#e8a030">
        <rect x="6" y="1" width="3" height="3" />
        <rect x="6" y="8.500" width="3" height="3" />
        <rect x="6" y="16" width="3" height="3" />
      </g>
      <path d="M11 18h5V9h3l-5.500-7L8 9h3z" fill="#3f75ad" />
    </g>
  ),
  removeLayer: (
    <g>
      <rect x="3" y="2" width="14" height="14" fill="#fff" stroke="#666" />
      <rect x="11" y="12" width="8" height="7" fill="#d83a34" />
      <path d="M13 15.500h4" stroke="#fff" strokeWidth="1.500" />
    </g>
  ),
  raster,
  multiband: (
    <g>
      <defs>
        <linearGradient id="rb">
          <stop offset="0" stopColor="#e01010" />
          <stop offset="1" stopColor="#300000" />
        </linearGradient>
        <linearGradient id="gb">
          <stop offset="0" stopColor="#000" />
          <stop offset="1" stopColor="#10d010" />
        </linearGradient>
        <linearGradient id="bb">
          <stop offset="0" stopColor="#000" />
          <stop offset="1" stopColor="#1820e0" />
        </linearGradient>
      </defs>
      <rect x="2" y="2" width="16" height="5.500" fill="url(#rb)" />
      <rect x="2" y="7.500" width="16" height="5.500" fill="url(#gb)" />
      <rect x="2" y="13" width="16" height="5" fill="url(#bb)" />
    </g>
  ),
  sideInfo: (
    <g>
      <rect x="1" y="2" width="18" height="12" fill="#c9d2de" />
      <path d="M3 5h3v7H3zM8 6h8M8 9h6" stroke="#556" />
      <path d="M1 17h18" stroke="#e4e4e4" strokeWidth="1.500" />
    </g>
  ),
  sideHist: (
    <g>
      <rect x="1" y="4" width="18" height="12" fill="#d6d6d6" />
      <path d="M3 13l4-5 3 3 3-2 4 3" stroke="#778" fill="none" />
    </g>
  ),
  sideTree: (
    <g>
      <rect x="6" y="1" width="8" height="6" fill="#d84a4a" />
      <path d="M10 7v4M4 11h12M4 11v3M16 11v3M8 7l-1 5M12 7l1 5" stroke="#c8a060" strokeWidth="1.500" fill="none" />
      <rect x="1" y="13" width="8" height="6" fill="#f0d050" />
      <rect x="11" y="13" width="8" height="6" fill="#6a9fd8" />
    </g>
  ),
  sideHistory: (
    <g>
      <g transform="translate(-1 -2) scale(.8)">{redo}</g>
      <g transform="translate(4 5) scale(.8)">{undo}</g>
    </g>
  ),
  globeGrey: (
    <g fill="none" stroke="#8a8a8a">
      <circle cx="10" cy="10" r="8" fill="#bdbdbd" />
      <path d="M2 10h16M10 2v16M4 5q6 3 12 0M4 15q6-3 12 0" stroke="#eee" />
      <ellipse cx="10" cy="10" rx="4" ry="8" stroke="#eee" />
    </g>
  ),
  mouse: (
    <g>
      <path d="M4 7l8-4 5 9-7 5z" fill="#555" />
      <path d="M7 8l4-2 3 6-4 2z" fill="#ddd" />
      <path d="M2 4l3 2M15 3l3-1M2 12l3 4" stroke="#555" />
      <path d="M3 10l6 8" stroke="#444" strokeWidth="2" />
    </g>
  ),
  lock: (
    <g>
      <path d="M6 9V6a4 4 0 0 1 8 0v3" fill="none" stroke="#7c7c7c" strokeWidth="1.800" />
      <rect x="4" y="9" width="12" height="9" rx="1.500" fill="#7c7c7c" />
    </g>
  ),
  chat: (
    <g>
      <path d="M3 3h14q2 0 2 2v8q0 2-2 2h-5l-4 4v-4H3q-2 0-2-2V5q0-2 2-2z" fill="#6c6c6c" />
      <g fill="#fff">
        <circle cx="6" cy="9" r="1.300" />
        <circle cx="10" cy="9" r="1.300" />
        <circle cx="14" cy="9" r="1.300" />
      </g>
    </g>
  ),
  tick: <path d="M3 11l4 6L17 2l-10 10z" fill="#7cc44a" stroke="#5a9a30" strokeWidth=".6" />,
  search: (
    <g fill="none" stroke="#999" strokeWidth="1.600">
      <circle cx="8" cy="8" r="5.500" />
      <path d="M12 12l6 6" />
    </g>
  ),
  checkMark: <path d="M4 10l4 6 8-13" fill="none" stroke="#222" strokeWidth="2.200" />,
};

const Ico = ({ name, size = 20 }) => (
  <svg width={size} height={size} viewBox="0 0 20 20">
    {ICONS[name]}
  </svg>
);

// "|" grip, "v" drop arrow, "v-" disabled drop arrow, "!" separator, "~x" disabled, "*x" checked
const TB1 = [
  "|", "new", "open", "save", "saveAs", "layout", "style", "|", "*hand", "~panSel", "zoomIn", "zoomOut", "full",
  "~zoomLayer", "zoomSel", "zoom1", "zoomLast", "~zoomNext", "~newMap", "~new3d", "bookNew", "~bookList", "~clock",
  "refresh", "|", "~select", "v-", "~expr", "v-", "deselect", "v", "selLoc", "|", "identify", "~table", "gear",
  "sigma", "~list", "v-", "ruler", "v", "balloon", "~cogZoom", "v-",
];
const TB2 = [
  "|", "dsm", "gpkg", "vline", "feather", "chip", "rasterNew", "meshNew", "|", "~edits", "~pencil", "~saveEdit",
  "~blobNew", "~vertex", "v-", "~note", "~trash", "~scissors", "~copy", "~paste", "~undo", "~redo", "|", "~abc",
  "~abcPin", "!", "abcPinBlue", "abcRed", "!", "~abcPin", "~abcEye", "~abcMove", "~abcRot", "~abcEdit", "|", "fIcon",
  "globeAdd", "*globeQuery", "globeBino", "|", "python", "plugins", "|", "help", "|",
];
const TB3 = [
  "|", "chart", "|", "globeKey", "|", "~dig1", "~dig2", "v-", "~dig3", "~dig4", "v-", "|", "labelA", "v", "multiSel",
  "poly", "curve", "starAdd", "textAdd", "!", "callout", "v", "|", "greenLens", "mapEdit", "|", "share",
];
const TB_LAYERS = ["*brush", "addGroup", "eye", "funnel", "~epsilon", "v-", "expand", "collapse", "removeLayer"];

const Tools = ({ items }) =>
  items.map((t, i) => {
    if (t === "|") return <S.Grip key={i} />;
    if (t === "v") return <S.Drop key={i} />;
    if (t === "v-") return <S.Drop key={i} $off />;
    if (t === "!") return <S.Sep key={i} />;
    const off = t[0] === "~";
    const on = t[0] === "*";
    return (
      <S.ToolBtn key={i} $off={off} $on={on}>
        <Ico name={off || on ? t.slice(1) : t} />
      </S.ToolBtn>
    );
  });

const MENUS = [
  ["Pro", "j", "ect"], ["", "E", "dit"], ["", "V", "iew"], ["", "L", "ayer"], ["", "S", "ettings"],
  ["", "P", "lugins"], ["Vect", "o", "r"], ["", "R", "aster"], ["", "D", "atabase"], ["", "W", "eb"],
  ["", "M", "esh"], ["MMQGIS", "", ""], ["Pro", "c", "essing"], ["", "H", "elp"],
];

const DockButtons = ({ right }) => (
  <S.DockBtns $r={right}>
    <svg width="13" height="13" viewBox="0 0 13 13" fill="none" stroke="#555">
      <rect x=".5" y=".5" width="12" height="12" rx="2" />
      <rect x="5" y="3" width="5" height="5" />
      <rect x="3" y="5" width="5" height="5" fill="#efefef" />
    </svg>
    <svg width="13" height="13" viewBox="0 0 13 13" fill="none" stroke="#555">
      <rect x=".5" y=".5" width="12" height="12" rx="2" />
      <path d="M3.500 3.500l6 6M9.500 3.500l-6 6" strokeWidth="1.600" />
    </svg>
  </S.DockBtns>
);

const Combo = ({ text, icon, w, h, ls }) => (
  <S.Combo $w={w} $h={h}>
    {icon && <Ico name={icon} size={14} />}
    <S.ComboText $ls={ls}>{text}</S.ComboText>
    <S.ComboArrow />
  </S.Combo>
);

const Spin = ({ value, w, h, off }) => (
  <S.Spin $w={w} $h={h} $off={off}>
    <S.SpinText>{value}</S.SpinText>
    <S.SpinBtns $off={off}>
      <S.Tri $dir="u" $c={off ? "#ccc" : "#666"} />
      <S.Tri $dir="d" $c={off ? "#ccc" : "#666"} />
    </S.SpinBtns>
  </S.Spin>
);

const Slider = ({ w, value, fill = "#3e9ada", mr }) => (
  <S.SliderBox $w={w} $mr={mr}>
    <S.Track $value={value} $fill={fill} />
    <S.Handle $value={value} />
  </S.SliderBox>
);

const Band = ({ name, band, max, mt }) => (
  <>
    <S.Row $mt={mt}>
      <S.Label $w={110}>{name}</S.Label>
      <Combo text={band} />
    </S.Row>
    <S.Row $mt={6}>
      <S.Label $w={145}>
        <S.Tip $ml={110}>Min</S.Tip>
      </S.Label>
      <S.Input $w={141}>0</S.Input>
      <S.Label $w={45.500}>
        <S.Tip $ml={7.500}>Max</S.Tip>
      </S.Label>
      <S.Input>{max}</S.Input>
    </S.Row>
  </>
);

const SliderRow = ({ name, value, spin, mt = 8 }) => (
  <S.Row $h={29} $mt={mt}>
    <S.Label $w={120}>{name}</S.Label>
    <Slider w={222} value={value} mr={7.500} />
    <Spin value={spin} />
  </S.Row>
);

const Checked = ({ mr }) => (
  <S.Check $mr={mr}>
    <Ico name="checkMark" size={12} />
  </S.Check>
);

const WEST =
  "M150 0L850 90 850 105 838 135 790 130 760 165 700 205 660 240 620 255 585 275 545 290 525 325 495 365 475 395 465 430 485 450 440 460 410 470 385 510 365 560 350 600 335 625 300 680 240 720 222 728 240 755 300 745 370 770 405 790 412 850 405 920 398 1000 392 1060 385 1140 375 1200 350 1260 330 1320 290 1400 270 1430 0 1400z";
const LONG =
  "M370 645L380 590 395 530 430 475 490 455 505 478 525 440 555 422 550 385 590 365 640 345 665 382 668 345 700 310 722 330 830 332 842 290 900 270 1010 260 1090 240 1150 215 1210 165 1235 150 1250 180 1200 235 1150 275 1170 285 1220 250 1260 190 1300 165 1320 190 1360 165 1475 175 1350 250 1270 305 1240 330 1230 300 1180 350 1120 375 1060 405 1000 430 930 440 860 490 800 490 740 520 680 555 620 590 540 610 440 640 400 640z";

// the map is one drawn picture; coordinates follow the scene corners at 1568 units for 800px
const MapScene = () => (
  <S.MapSvg width="800" height="800" viewBox="0 0 1568 1568">
    <defs>
      <clipPath id="scene">
        <path d="M196 30L1527 180 1367 1550 40 1388z" />
      </clipPath>
      <clipPath id="landClip">
        <path d={WEST} />
        <path d={LONG} />
      </clipPath>
      <filter
        id="landTex"
        filterUnits="userSpaceOnUse"
        x="0"
        y="0"
        width="1568"
        height="1568"
        colorInterpolationFilters="sRGB"
      >
        <feTurbulence type="fractalNoise" baseFrequency="0.075" numOctaves="3" seed="3" />
        <feColorMatrix values="0 0 0 0 0.31  0 0 0 0 0.47  0 0 0 0 0.19  0 0 0 4 -2.300" result="patch" />
        <feTurbulence type="fractalNoise" baseFrequency="0.16" numOctaves="2" seed="11" />
        <feColorMatrix values="0 0 0 0 0.21  0 0 0 0 0.27  0 0 0 0 0.18  0 0 0 2 -0.900" result="fine" />
        <feMerge result="all">
          <feMergeNode in="SourceGraphic" />
          <feMergeNode in="fine" />
          <feMergeNode in="patch" />
        </feMerge>
        <feComposite in="all" in2="SourceGraphic" operator="in" result="tex" />
        <feTurbulence type="fractalNoise" baseFrequency="0.06" numOctaves="4" seed="7" result="n" />
        <feDisplacementMap in="tex" in2="n" scale="14" xChannelSelector="R" yChannelSelector="G" />
      </filter>
      <filter id="rough" filterUnits="userSpaceOnUse" x="0" y="0" width="1568" height="1568">
        <feTurbulence type="fractalNoise" baseFrequency="0.06" numOctaves="3" seed="5" result="n" />
        <feDisplacementMap in="SourceGraphic" in2="n" scale="10" xChannelSelector="R" yChannelSelector="G" />
      </filter>
      <radialGradient id="city">
        <stop offset="0" stopColor="#5a5d58" stopOpacity=".55" />
        <stop offset="1" stopColor="#5a5d58" stopOpacity="0" />
      </radialGradient>
      <radialGradient id="brown">
        <stop offset="0" stopColor="#6e6438" stopOpacity=".45" />
        <stop offset="1" stopColor="#6e6438" stopOpacity="0" />
      </radialGradient>
    </defs>
    <g clipPath="url(#scene)">
      <rect width="1568" height="1568" fill="#081421" />
      <g filter="url(#landTex)" fill="#3e5730">
        <path d={WEST} />
        <path d={LONG} />
      </g>
      <g clipPath="url(#landClip)">
        <ellipse cx="400" cy="530" rx="110" ry="130" fill="url(#city)" />
        <ellipse cx="220" cy="560" rx="130" ry="190" fill="url(#city)" />
        <ellipse cx="620" cy="480" rx="170" ry="70" fill="url(#city)" opacity=".5" />
        <ellipse cx="200" cy="130" rx="100" ry="230" fill="url(#brown)" />
        <ellipse cx="100" cy="1230" rx="80" ry="170" fill="url(#brown)" />
      </g>
      <g filter="url(#rough)" fill="none" strokeLinecap="round">
        <path
          d="M318 50C325 90 335 110 350 130C372 150 385 170 388 200C395 250 405 290 395 340C385 400 370 440 358 490C350 540 345 570 345 610"
          stroke="#0a1628"
          strokeWidth="7"
        />
        <path d="M352 135L385 175" stroke="#101c33" strokeWidth="12" />
        <path d="M388 195C395 240 402 270 398 305" stroke="#101c33" strokeWidth="16" />
        <path d="M365 470L345 560" stroke="#0a1628" strokeWidth="11" />
        <path d="M340 575L270 600 245 640 230 700 190 720 150 740" stroke="#0a1526" strokeWidth="4" />
        <path d="M345 620L310 670 240 725" stroke="#081421" strokeWidth="24" />
        <path d="M400 125L450 125 500 90" stroke="#0b1422" strokeWidth="3" />
        <path d="M300 490L280 540 245 620" stroke="#0b1422" strokeWidth="3" />
        <path d="M350 820L380 808 405 795" stroke="#081421" strokeWidth="8" />
        <path d="M385 830L355 850 310 850" stroke="#081421" strokeWidth="3" />
        <path d="M385 945L372 950 360 960" stroke="#0a1622" strokeWidth="2.500" />
        <path d="M390 1020L365 1015 340 1005" stroke="#0a1622" strokeWidth="3" />
        <path d="M385 1050L355 1055 330 1045" stroke="#0a1622" strokeWidth="3" />
        <path d="M385 1095L360 1100 335 1105" stroke="#0a1622" strokeWidth="5" />
        <path d="M382 1140L350 1150 315 1150" stroke="#0a1622" strokeWidth="4" />
        <path d="M500 600L450 595 440 620 480 615z" stroke="#081421" strokeWidth="8" fill="#081421" />
        <path d="M470 450L510 420 520 465" stroke="#081421" strokeWidth="10" />
        <path d="M380 500L410 470 480 450" stroke="#081421" strokeWidth="9" />
        <ellipse cx="1215" cy="240" rx="45" ry="26" transform="rotate(-35 1215 240)" fill="#081421" />
        <path d="M830 332L790 345 740 340 690 345" stroke="#081421" strokeWidth="6" />
      </g>
      <g fill="#0d1a20">
        <ellipse cx="470" cy="232" rx="8" ry="12" />
        <ellipse cx="335" cy="295" rx="6" ry="10" />
        <ellipse cx="190" cy="355" rx="5" ry="5" />
        <ellipse cx="285" cy="965" rx="9" ry="5" />
        <ellipse cx="490" cy="245" rx="5" ry="7" />
        <ellipse cx="520" cy="95" rx="12" ry="4" />
        <ellipse cx="200" cy="180" rx="4" ry="8" />
        <ellipse cx="225" cy="1062" rx="6" ry="4" />
      </g>
      <g fill="#6b5a40" opacity=".55">
        <ellipse cx="235" cy="1118" rx="14" ry="6" />
        <ellipse cx="205" cy="1085" rx="22" ry="5" />
        <ellipse cx="245" cy="1170" rx="14" ry="7" />
      </g>
      <g fill="none" stroke="#5f6a58" strokeLinecap="round">
        <path d="M415 660L520 618 625 610" strokeWidth="3.500" />
        <path d="M625 610L790 555 910 505 1050 435 1140 385 1280 305 1475 175" strokeWidth="2" />
        <path d="M375 722C392 735 400 760 405 790" strokeWidth="4.500" />
        <path d="M408 800L412 850 405 920 395 1040 388 1180 386 1280 360 1350 330 1423" strokeWidth="2.500" />
      </g>
    </g>
  </S.MapSvg>
);

export default function App() {
  return (
    <S.Root>
      <Global />
      <S.TitleBar>
        <S.Tri $dir="d" $c="#bdbdbd" $s={4} />
        <S.Title>*Untitled Project — QGIS</S.Title>
        <svg width="40" height="10" viewBox="0 0 40 10" stroke="#b0b0b0" fill="none">
          <path d="M2 6h7M16 8l6-6M17 2h5v5M30 2l7 7M37 2l-7 7" />
        </svg>
      </S.TitleBar>
      <S.MenuBar>
        {MENUS.map(([a, b, c]) => (
          <S.MenuItem key={a + b + c}>
            {a}
            <u>{b}</u>
            {c}
          </S.MenuItem>
        ))}
      </S.MenuBar>
      <S.Toolbar>
        <Tools items={TB1} />
      </S.Toolbar>
      <S.Toolbar>
        <Tools items={TB2} />
      </S.Toolbar>
      <S.Toolbar $h={30} $pt={2}>
        <Tools items={TB3} />
      </S.Toolbar>
      <S.Main>
        <S.LeftDock>
          <S.DockTitle $h={31} $pb={2}>
            Layers
            <DockButtons />
          </S.DockTitle>
          <S.LayerTools>
            <Tools items={TB_LAYERS} />
          </S.LayerTools>
          <S.Tree>
            <S.TreeRow>
              <S.Twisty />
              <S.Check $mr={7}>
                <Ico name="checkMark" size={12} />
              </S.Check>
              <Ico name="raster" size={14} />
              <S.TreeName>LC08_L1TP_013032_20231028_20231101_02_T1_refl</S.TreeName>
            </S.TreeRow>
          </S.Tree>
          <S.HScroll>
            <S.ScrollBtn>
              <S.Tri $dir="l" />
            </S.ScrollBtn>
            <S.ThumbH />
            <S.GrooveH />
            <S.ScrollBtn $w={13}>
              <S.Tri $dir="r" />
            </S.ScrollBtn>
          </S.HScroll>
          <S.Tabs $h={33} $mt={1}>
            <S.Tab $w={85}>Browser</S.Tab>
            <S.Tab $w={71} $on>
              Layers
            </S.Tab>
          </S.Tabs>
        </S.LeftDock>

        <S.Canvas>
          <MapScene />
        </S.Canvas>

        <S.RightDock>
          <S.DockTitle $h={30}>
            Layer Styling
            <DockButtons />
          </S.DockTitle>
          <S.LayerCombo>
            <Combo text="LC08_L1TP_013032_20231028_20231101_02_T1_refl" icon="raster" h={30} ls={0.1} />
          </S.LayerCombo>
          <S.Body>
            <S.Side>
              <S.SideTop>
                <Ico name="brush" size={17} />
              </S.SideTop>
              <S.SideRest>
                <Ico name="sideInfo" size={16} />
                <Ico name="sideHist" size={16} />
                <Ico name="sideTree" size={16} />
                <Ico name="sideHistory" size={16} />
              </S.SideRest>
            </S.Side>
            <S.Column>
              <S.Scroller>
                <S.Form>
                  <Combo text="Multiband color" icon="multiband" />
                  <Band mt={6} name="Red band" band="Band 1 (Red)" max="195" />
                  <Band mt={6} name="Green band" band="Band 2 (Green)" max="166" />
                  <Band mt={6} name="Blue band" band="Band 3 (Blue)" max="164" />
                  <S.Row $h={44} $mt={7}>
                    <S.Label $w={110}>Contrast enhancement</S.Label>
                    <Combo text="No Enhancement" />
                  </S.Row>
                  <S.Expander>
                    <S.Tri $dir="r" $s={5} $c="#333" />
                    Min / Max Value Settings
                  </S.Expander>
                  <S.Heading $mt={9}>Layer Rendering</S.Heading>
                  <S.Group $h={382}>
                    <S.Row>
                      <S.Label $w={120}>Blending mode</S.Label>
                      <Combo text="Normal" />
                    </S.Row>
                    <SliderRow name="Brightness" value={50} spin="0" mt={7} />
                    <SliderRow name="Saturation" value={50} spin="0" />
                    <SliderRow name="Contrast" value={50} spin="0" />
                    <SliderRow name="Gamma" value={11.400} spin="1.00" />
                    <S.Row $h={24} $mt={9}>
                      <S.Label $w={120} />
                      <S.Check />
                      Invert colors
                    </S.Row>
                    <S.Row $mt={9}>
                      <S.Label $w={120}>Grayscale</S.Label>
                      <Combo text="Off" />
                    </S.Row>
                    <S.HueBlock>
                      <S.Label $w={120} $top={22}>
                        Hue
                      </S.Label>
                      <S.HueCol>
                        <S.Row $h={26}>
                          <S.Check />
                          Colorize
                          <S.ColorBtn />
                          <S.ColorArrow>
                            <S.Tri $dir="d" $c="#ccc" $s={3} />
                          </S.ColorArrow>
                        </S.Row>
                        <S.Row $h={28} $mt={10}>
                          <S.Label $w={115.500}>Strength</S.Label>
                          <Slider w={130} value={95} fill="#8a8a8a" mr={7.500} />
                          <Spin value="100%" off h={28} />
                        </S.Row>
                        <S.Row $h={29} $mt={7}>
                          <S.Button $w={78} $h={29} $start>
                            <Ico name="undo" size={16} />
                            Reset
                          </S.Button>
                        </S.Row>
                      </S.HueCol>
                    </S.HueBlock>
                  </S.Group>
                  <S.Heading $mt={8}>Resampling</S.Heading>
                  <S.Group $h={90} $pt={10}>
                    <S.Row>
                      <S.Label $w={226.500}>Zoomed in</S.Label>
                      <Combo text="Nearest Neighbour" />
                    </S.Row>
                    <S.Row $mt={6}>
                      <S.Label $w={226.500}>Zoomed out</S.Label>
                      <Combo text="Nearest Neighbour" />
                    </S.Row>
                  </S.Group>
                </S.Form>
                <S.VScroll>
                  <S.ScrollBtn $w={12} $h="16px">
                    <S.Tri $dir="u" />
                  </S.ScrollBtn>
                  <S.ThumbV />
                  <S.GrooveV />
                  <S.ScrollBtn $w={12} $h="13px">
                    <S.Tri $dir="d" />
                  </S.ScrollBtn>
                </S.VScroll>
              </S.Scroller>
              <S.Footer>
                <S.Button $w={24} $h={22}>
                  <Ico name="undo" size={15} />
                </S.Button>
                <S.Button $w={24} $h={22} $ml={6}>
                  <Ico name="redo" size={15} />
                </S.Button>
                <S.Tip $ml={233}>
                  <Checked mr={6} />
                </S.Tip>
                Live update
                <S.ApplyWrap>
                  <S.Button $w={79} $h={30}>
                    <Ico name="tick" size={20} />
                    Apply
                  </S.Button>
                </S.ApplyWrap>
              </S.Footer>
            </S.Column>
          </S.Body>
          <S.Tabs $h={32} $mt={5} $ml={-3}>
            <S.Tab $w={94}>Search ...</S.Tab>
            <S.Tab $w={81}>Data...</S.Tab>
            <S.Tab $w={98} $on>
              Layer St...
            </S.Tab>
            <S.Tab $w={112}>Results Vi...</S.Tab>
            <S.Tab $w={147}>Processing To...</S.Tab>
          </S.Tabs>
        </S.RightDock>
      </S.Main>
      <S.Status>
        <S.Locator>
          <Ico name="search" size={13} />
          Type to locate (Ctrl+K)
        </S.Locator>
        <S.Message>1 legend entries removed.</S.Message>
        <S.Tip $w={86.800}>Coordinate</S.Tip>
        <S.Input $w={144} $h={30}>
          1728911,1307049
        </S.Input>
        <S.Tip $ml={4.500}>
          <Ico name="mouse" size={18} />
        </S.Tip>
        <S.Tip $ml={11} $w={42}>
          Scale
        </S.Tip>
        <S.Combo $w={104} $h={30}>
          <S.ComboText>1:1068751</S.ComboText>
          <S.ComboDivider />
          <S.ComboArrow />
        </S.Combo>
        <S.Tip $ml={12}>
          <Ico name="lock" size={16} />
        </S.Tip>
        <S.Tip $ml={6.500} $w={75.500}>
          Magnifier
        </S.Tip>
        <Spin value="100%" w={86} h={30} />
        <S.Tip $ml={11} $w={72}>
          Rotation
        </S.Tip>
        <Spin value="0.0 °" w={86} h={30} />
        <S.Tip $ml={7}>
          <Checked mr={6} />
        </S.Tip>
        <S.Tip $w={53}>Render</S.Tip>
        <S.Tip $ml={16} $mr={3}>
          <Ico name="globeGrey" size={16} />
        </S.Tip>
        <S.Tip $w={77}>EPSG:2781</S.Tip>
        <S.Tip $ml={27} $mr={5}>
          <Ico name="chat" size={18} />
        </S.Tip>
      </S.Status>
    </S.Root>
  );
}
